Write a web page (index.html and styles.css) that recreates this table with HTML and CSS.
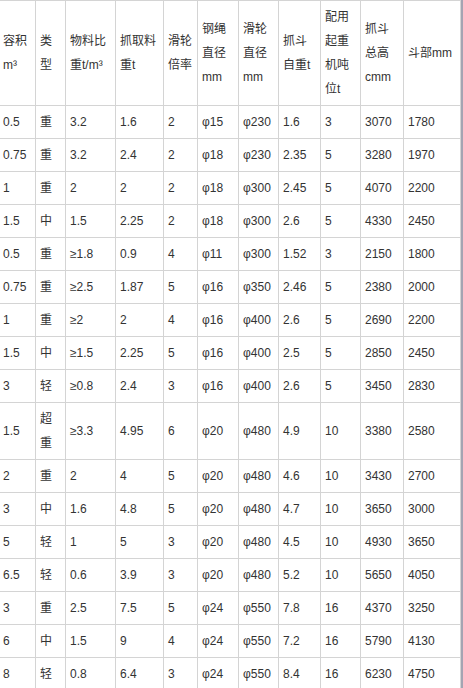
FILE: index.html
```html
<!DOCTYPE html>
<html lang="zh">
<head>
<meta charset="utf-8">
<title>抓斗参数</title>
<link rel="stylesheet" href="styles.css">
</head>
<body>
<div class="page">
  <div class="sheet">
    <table class="spec">
      <colgroup>
        <col class="c1"><col class="c2"><col class="c3"><col class="c4"><col class="c5"><col class="c6"><col class="c7"><col class="c8"><col class="c9"><col class="c10"><col class="c11">
      </colgroup>
      <thead>
        <tr>
          <td>容积m³</td><td>类型</td><td>物料比重t/m³</td><td>抓取料重t</td><td>滑轮倍率</td><td>钢绳直径mm</td><td>滑轮直径mm</td><td>抓斗自重t</td><td>配用起重机吨位t</td><td>抓斗总高cmm</td><td>斗部mm</td>
        </tr>
      </thead>
      <tbody>
        <tr><td>0.5</td><td>重</td><td>3.2</td><td>1.6</td><td>2</td><td>φ15</td><td>φ230</td><td>1.6</td><td>3</td><td>3070</td><td>1780</td></tr>
        <tr><td>0.75</td><td>重</td><td>3.2</td><td>2.4</td><td>2</td><td>φ18</td><td>φ230</td><td>2.35</td><td>5</td><td>3280</td><td>1970</td></tr>
        <tr><td>1</td><td>重</td><td>2</td><td>2</td><td>2</td><td>φ18</td><td>φ300</td><td>2.45</td><td>5</td><td>4070</td><td>2200</td></tr>
        <tr><td>1.5</td><td>中</td><td>1.5</td><td>2.25</td><td>2</td><td>φ18</td><td>φ300</td><td>2.6</td><td>5</td><td>4330</td><td>2450</td></tr>
        <tr><td>0.5</td><td>重</td><td>≥1.8</td><td>0.9</td><td>4</td><td>φ11</td><td>φ300</td><td>1.52</td><td>3</td><td>2150</td><td>1800</td></tr>
        <tr><td>0.75</td><td>重</td><td>≥2.5</td><td>1.87</td><td>5</td><td>φ16</td><td>φ350</td><td>2.46</td><td>5</td><td>2380</td><td>2000</td></tr>
        <tr><td>1</td><td>重</td><td>≥2</td><td>2</td><td>4</td><td>φ16</td><td>φ400</td><td>2.6</td><td>5</td><td>2690</td><td>2200</td></tr>
        <tr><td>1.5</td><td>中</td><td>≥1.5</td><td>2.25</td><td>5</td><td>φ16</td><td>φ400</td><td>2.5</td><td>5</td><td>2850</td><td>2450</td></tr>
        <tr><td>3</td><td>轻</td><td>≥0.8</td><td>2.4</td><td>3</td><td>φ16</td><td>φ400</td><td>2.6</td><td>5</td><td>3450</td><td>2830</td></tr>
        <tr><td>1.5</td><td>超重</td><td>≥3.3</td><td>4.95</td><td>6</td><td>φ20</td><td>φ480</td><td>4.9</td><td>10</td><td>3380</td><td>2580</td></tr>
        <tr><td>2</td><td>重</td><td>2</td><td>4</td><td>5</td><td>φ20</td><td>φ480</td><td>4.6</td><td>10</td><td>3430</td><td>2700</td></tr>
        <tr><td>3</td><td>中</td><td>1.6</td><td>4.8</td><td>5</td><td>φ20</td><td>φ480</td><td>4.7</td><td>10</td><td>3650</td><td>3000</td></tr>
        <tr><td>5</td><td>轻</td><td>1</td><td>5</td><td>3</td><td>φ20</td><td>φ480</td><td>4.5</td><td>10</td><td>4930</td><td>3650</td></tr>
        <tr><td>6.5</td><td>轻</td><td>0.6</td><td>3.9</td><td>3</td><td>φ20</td><td>φ480</td><td>5.2</td><td>10</td><td>5650</td><td>4050</td></tr>
        <tr><td>3</td><td>重</td><td>2.5</td><td>7.5</td><td>5</td><td>φ24</td><td>φ550</td><td>7.8</td><td>16</td><td>4370</td><td>3250</td></tr>
        <tr><td>6</td><td>中</td><td>1.5</td><td>9</td><td>4</td><td>φ24</td><td>φ550</td><td>7.2</td><td>16</td><td>5790</td><td>4130</td></tr>
        <tr><td>8</td><td>轻</td><td>0.8</td><td>6.4</td><td>3</td><td>φ24</td><td>φ550</td><td>8.4</td><td>16</td><td>6230</td><td>4750</td></tr>
      </tbody>
    </table>
  </div>
  <div class="edge"></div>
</div>
</body>
</html>
```

FILE: styles.css
```css
html, body {
  margin: 0;
  padding: 0;
  background: #ffffff;
  overflow: hidden;
}

.page {
  display: flex;
  width: 463px;
  height: 688px;
  overflow: hidden;
}

.sheet {
  width: 461px;
  flex: 0 0 461px;
  overflow: hidden;
}

.edge {
  flex: 0 0 2px;
  background: #a4a4b2;
}

.spec {
  margin-left: -2px;
  width: 463px;
  table-layout: fixed;
  border-collapse: collapse;
  font-family: "Liberation Sans", "Noto Sans CJK SC", sans-serif;
  font-size: 12px;
  line-height: 24px;
  color: #333333;
}

.spec td {
  border: 1px solid #d4d4d4;
  padding: 4px 4px;
  vertical-align: middle;
  text-align: left;
  word-break: normal;
}

.c1 { width: 37px; }
.c2 { width: 30px; }
.c3 { width: 50px; }
.c4 { width: 48px; }
.c5 { width: 34px; }
.c6 { width: 41px; }
.c7 { width: 40px; }
.c8 { width: 42px; }
.c9 { width: 40px; }
.c10 { width: 43px; }
.c11 { width: 57px; }
```
